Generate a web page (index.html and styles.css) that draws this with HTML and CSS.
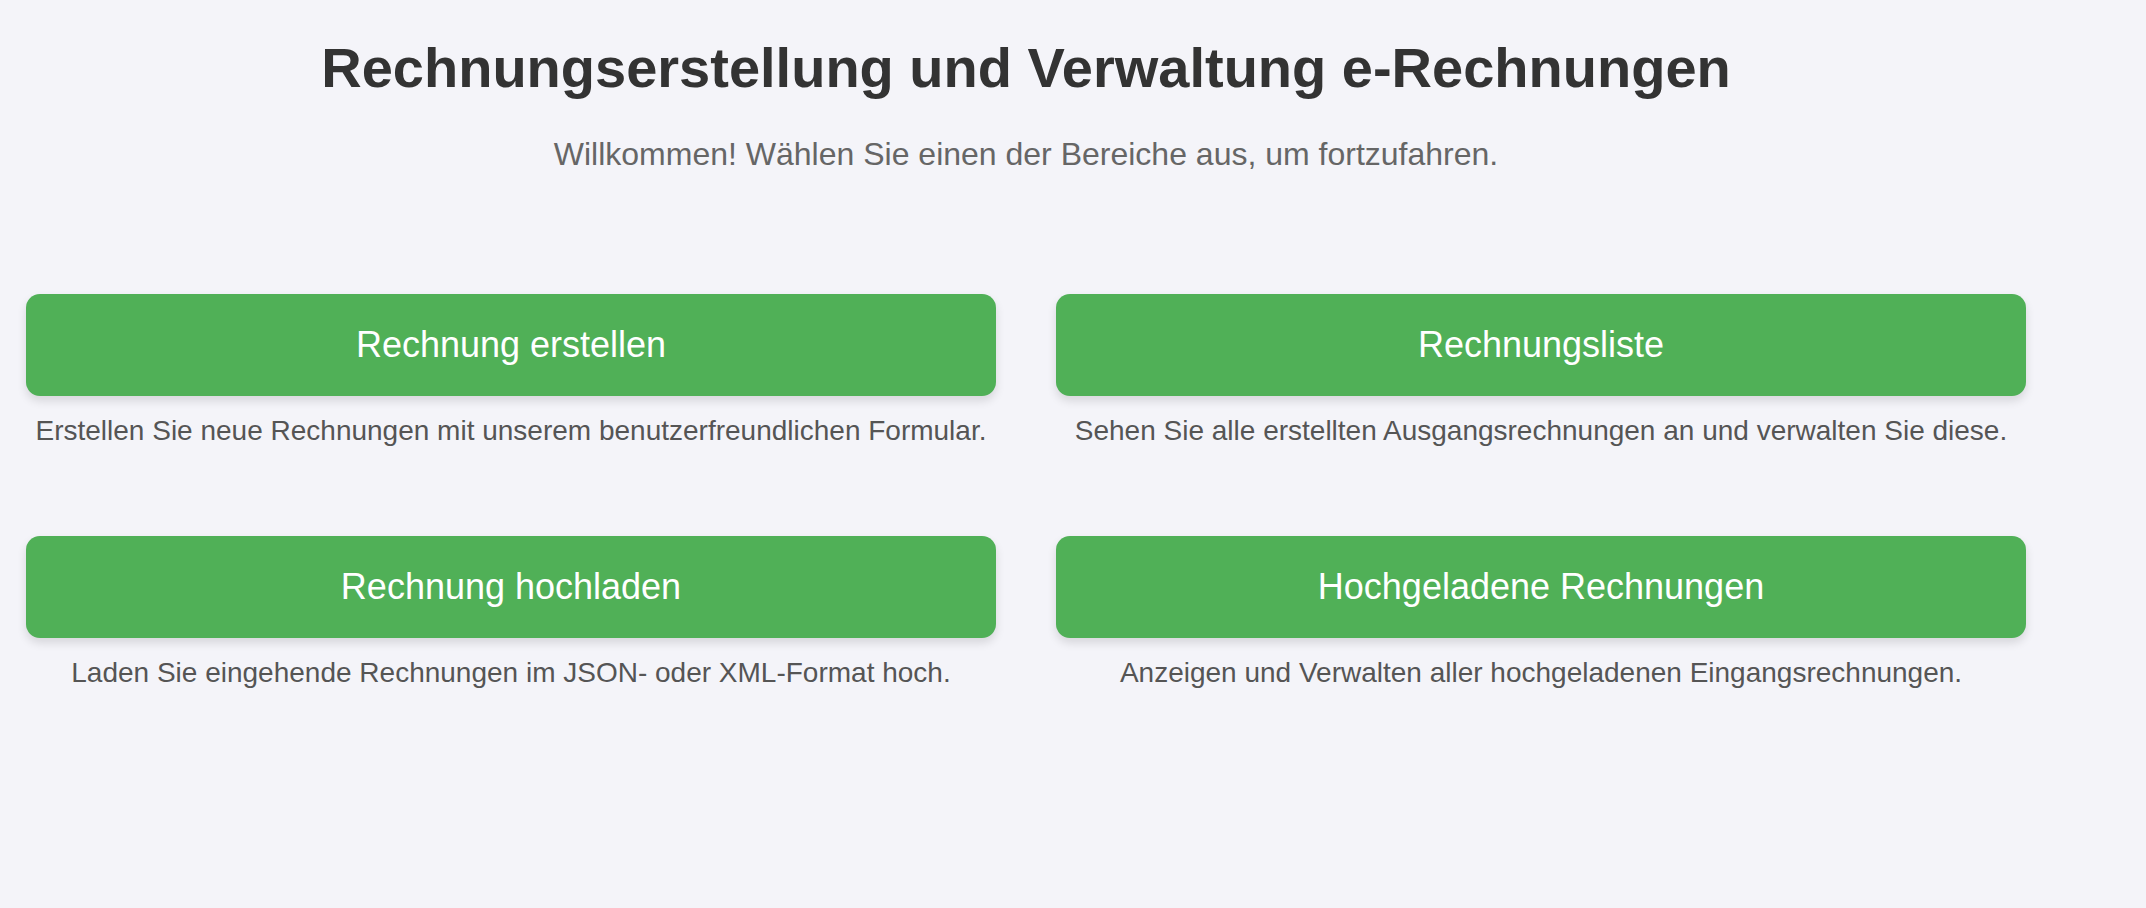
FILE: index.html
```html
<!DOCTYPE html>
<html lang="de">
<head>
<meta charset="utf-8">
<title>Rechnungserstellung und Verwaltung e-Rechnungen</title>
<link rel="stylesheet" href="styles.css">
</head>
<body>
<main class="page">
  <header class="intro">
    <h1 class="title">Rechnungserstellung und Verwaltung e-Rechnungen</h1>
    <p class="subtitle">Willkommen! Wählen Sie einen der Bereiche aus, um fortzufahren.</p>
  </header>
  <section class="grid">
    <div class="item">
      <a class="btn" href="#">Rechnung erstellen</a>
      <p class="desc">Erstellen Sie neue Rechnungen mit unserem benutzerfreundlichen Formular.</p>
    </div>
    <div class="item">
      <a class="btn" href="#">Rechnungsliste</a>
      <p class="desc">Sehen Sie alle erstellten Ausgangsrechnungen an und verwalten Sie diese.</p>
    </div>
    <div class="item">
      <a class="btn" href="#">Rechnung hochladen</a>
      <p class="desc">Laden Sie eingehende Rechnungen im JSON- oder XML-Format hoch.</p>
    </div>
    <div class="item">
      <a class="btn" href="#">Hochgeladene Rechnungen</a>
      <p class="desc">Anzeigen und Verwalten aller hochgeladenen Eingangsrechnungen.</p>
    </div>
  </section>
</main>
</body>
</html>
```

FILE: styles.css
```css
* { box-sizing: border-box; }

html, body {
  margin: 0;
  padding: 0;
  background: #f4f4f9;
  font-family: "Liberation Sans", Arial, sans-serif;
}

.page {
  width: 2000px;
  margin-left: 26px;
  padding-top: 35px;
  display: flex;
  flex-direction: column;
}

.intro {
  display: flex;
  flex-direction: column;
  align-items: center;
  text-align: center;
}

.title {
  margin: 0;
  font-size: 56px;
  font-weight: bold;
  color: #333333;
  line-height: normal;
}

.subtitle {
  margin: 36px 0 0;
  font-size: 32px;
  color: #666666;
  line-height: normal;
}

.grid {
  margin-top: 121px;
  display: grid;
  grid-template-columns: 970px 970px;
  column-gap: 60px;
  row-gap: 89px;
}

.item {
  display: flex;
  flex-direction: column;
  align-items: stretch;
  text-align: center;
}

.btn {
  display: flex;
  align-items: center;
  justify-content: center;
  height: 102px;
  background: #50b057;
  color: #ffffff;
  font-size: 36px;
  text-decoration: none;
  border-radius: 14px;
  box-shadow: 0 5px 10px rgba(0, 0, 0, 0.12);
}

.desc {
  margin: 19px 0 0;
  font-size: 28px;
  color: #555555;
  line-height: normal;
}
```
